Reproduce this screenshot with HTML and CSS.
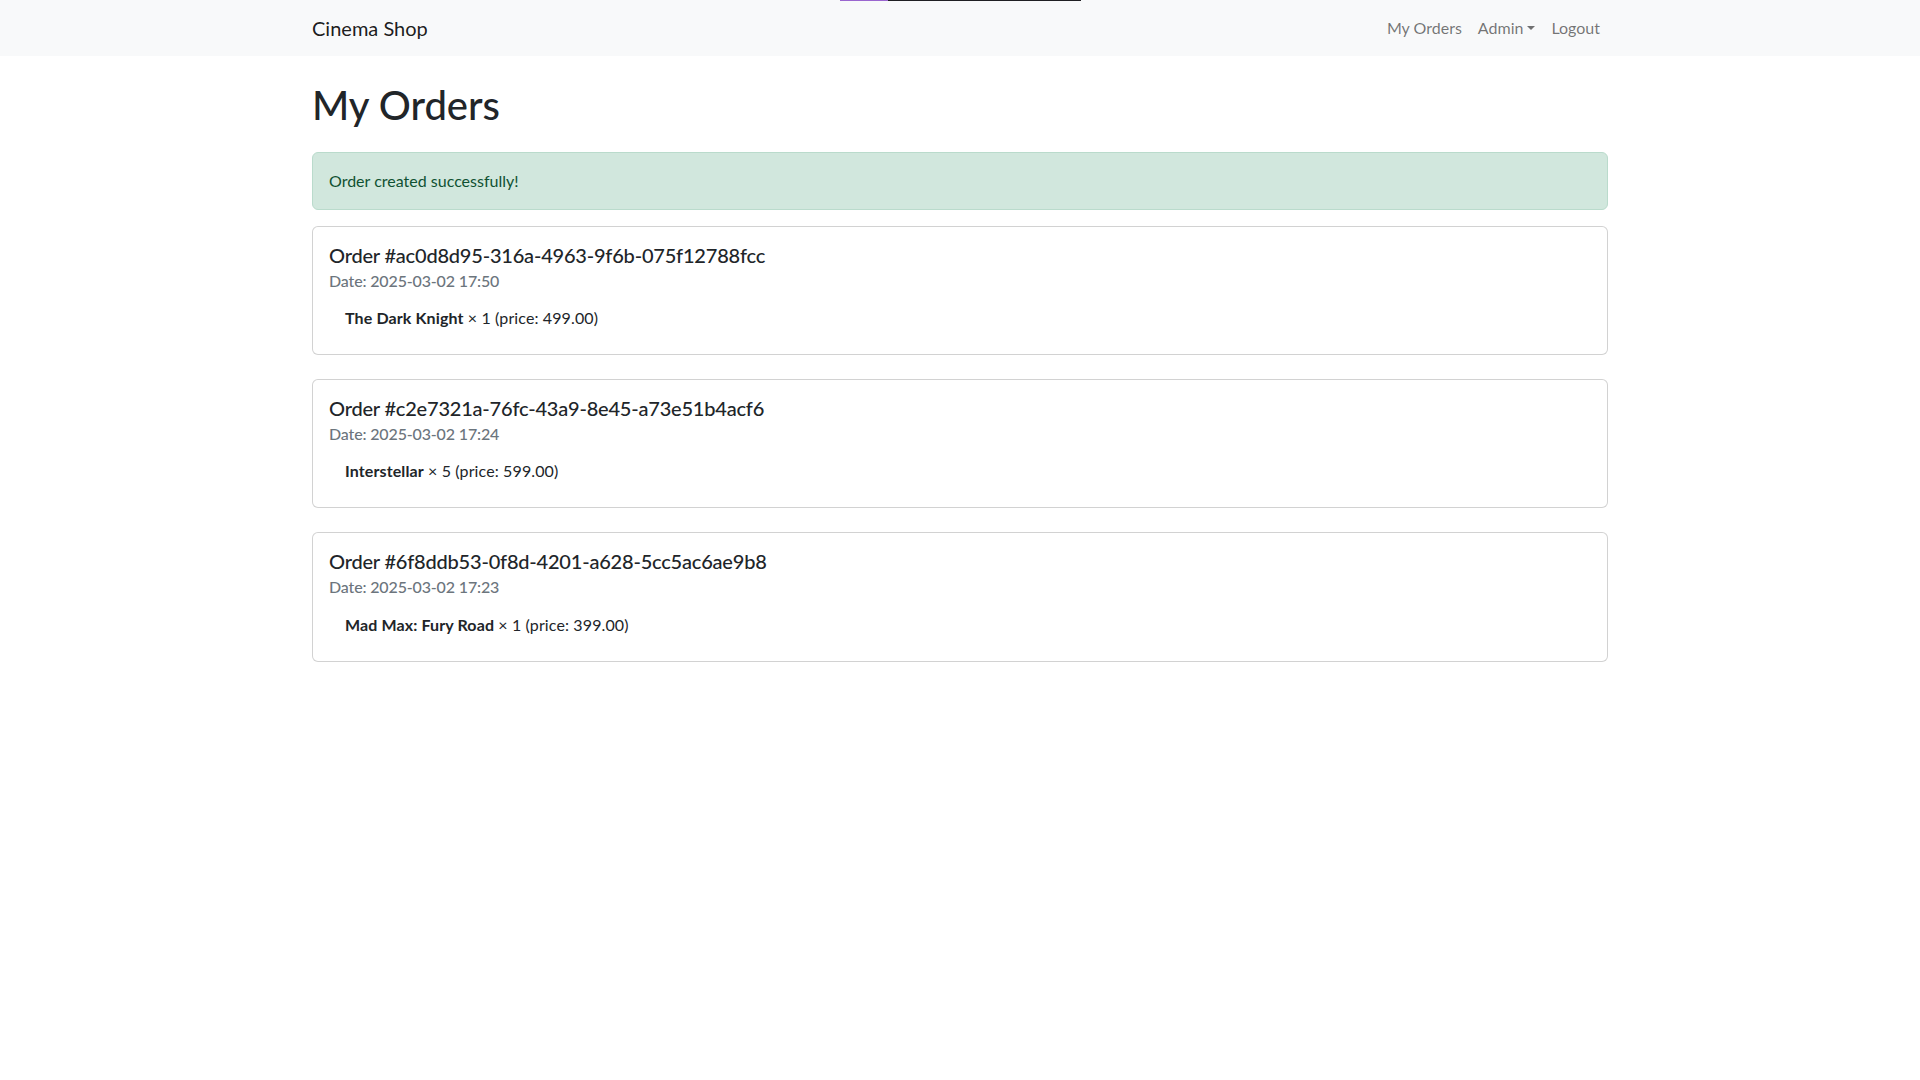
FILE: index.html
```html
<!DOCTYPE html>
<html lang="en">
<head>
<meta charset="utf-8">
<title>My Orders - Cinema Shop</title>
<link rel="stylesheet" href="styles.css">
</head>
<body>
<div class="load-bar"><span class="load-done"></span><span class="load-rest"></span></div>
<nav class="navbar">
  <div class="container nav-inner">
    <a class="brand" href="#">Cinema Shop</a>
    <ul class="nav-links">
      <li><a class="nav-link" href="#">My Orders</a></li>
      <li><a class="nav-link dropdown-toggle" href="#">Admin</a></li>
      <li><a class="nav-link" href="#">Logout</a></li>
    </ul>
  </div>
</nav>
<main class="container main">
  <h1 class="page-title">My Orders</h1>
  <div class="alert-success">Order created successfully!</div>

  <div class="card">
    <div class="card-body">
      <h5 class="card-title">Order #ac0d8d95-316a-4963-9f6b-075f12788fcc</h5>
      <h6 class="card-subtitle">Date: 2025-03-02 17:50</h6>
      <ul class="items">
        <li><strong>The Dark Knight</strong> × 1 (price: 499.00)</li>
      </ul>
    </div>
  </div>

  <div class="card">
    <div class="card-body">
      <h5 class="card-title">Order #c2e7321a-76fc-43a9-8e45-a73e51b4acf6</h5>
      <h6 class="card-subtitle">Date: 2025-03-02 17:24</h6>
      <ul class="items">
        <li><strong>Interstellar</strong> × 5 (price: 599.00)</li>
      </ul>
    </div>
  </div>

  <div class="card">
    <div class="card-body">
      <h5 class="card-title">Order #6f8ddb53-0f8d-4201-a628-5cc5ac6ae9b8</h5>
      <h6 class="card-subtitle">Date: 2025-03-02 17:23</h6>
      <ul class="items">
        <li><strong>Mad Max: Fury Road</strong> × 1 (price: 399.00)</li>
      </ul>
    </div>
  </div>
</main>
</body>
</html>
```
FILE: styles.css
```css
* { box-sizing: border-box; }
html, body { margin: 0; padding: 0; }
body {
  font-family: Lato, "Liberation Sans", sans-serif;
  font-size: 16px;
  line-height: 1.5;
  color: #212529;
  background: #fff;
}
a { text-decoration: none; }

.load-bar {
  position: absolute;
  top: 0;
  left: 840px;
  height: 1px;
  display: flex;
  z-index: 10;
}
.load-done { width: 48px; height: 1px; background: #9a66cf; }
.load-rest { width: 193px; height: 1px; background: #1f1f23; }

.container {
  max-width: 1320px;
  margin: 0 auto;
  padding: 0 12px;
}

.navbar {
  background: #f8f9fa;
  padding: 8px 0;
}
.nav-inner {
  display: flex;
  align-items: center;
  justify-content: space-between;
}
.brand {
  font-size: 20px;
  line-height: 30px;
  padding: 5px 0;
  color: rgba(0, 0, 0, 0.9);
  margin-right: 16px;
}
.nav-links {
  display: flex;
  list-style: none;
  margin: 0;
  padding: 0;
}
.nav-link {
  display: block;
  padding: 8px;
  line-height: 24px;
  color: rgba(0, 0, 0, 0.55);
}
.dropdown-toggle::after {
  content: "";
  display: inline-block;
  margin-left: 4px;
  vertical-align: 4px;
  border-top: 4.8px solid;
  border-right: 4.8px solid transparent;
  border-left: 4.8px solid transparent;
  border-bottom: 0;
}

.main { padding-top: 25px; }
.page-title {
  font-size: 40px;
  font-weight: 500;
  line-height: 1.2;
  margin: 0 0 23px;
}

.alert-success {
  padding: 16px;
  margin-bottom: 16px;
  border: 1px solid #badbcc;
  border-radius: 6px;
  background: #d1e7dd;
  color: #0f5132;
}

.card {
  border: 1px solid rgba(0, 0, 0, 0.175);
  border-radius: 6px;
  background: #fff;
  margin-bottom: 24px;
}
.card-body { padding: 16px; }
.card-title {
  font-size: 20px;
  font-weight: 500;
  line-height: 1.2;
  letter-spacing: -0.2px;
  margin: 0 0 8px;
}
.card-subtitle {
  font-size: 16px;
  font-weight: 500;
  line-height: 1.2;
  letter-spacing: -0.15px;
  margin: -4px 0 0;
  color: #6c757d;
}
.items {
  list-style: none;
  margin: 16px 0 8px;
  padding: 0 0 0 16px;
  letter-spacing: 0.12px;
}
.items strong { font-weight: 700; }
```
